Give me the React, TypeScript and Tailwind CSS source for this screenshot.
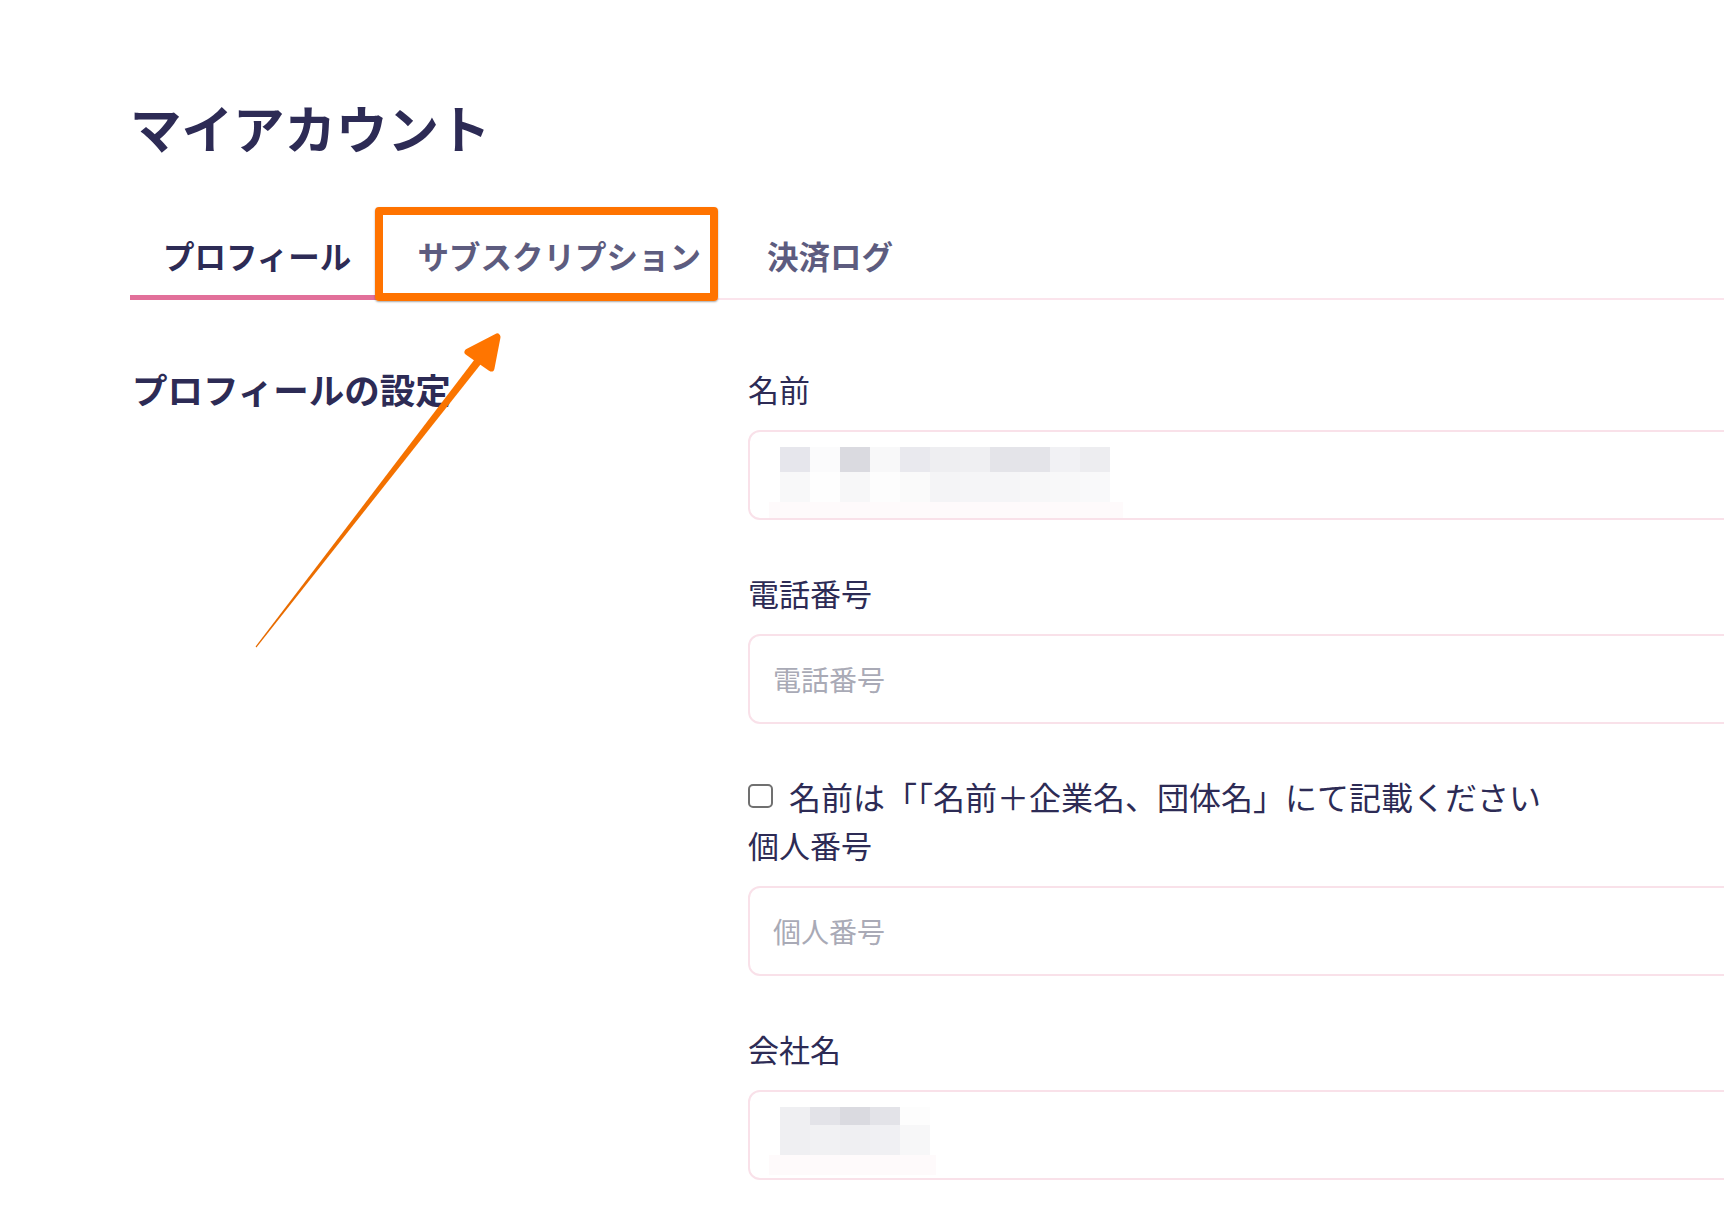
import React from "react";

const nameTop = [
  "bg-[#e6e6ec]", "bg-[#fbfbfc]", "bg-[#dadae0]", "bg-[#f8f8f9]", "bg-[#e9e9ee]", "bg-[#eeeef1]",
  "bg-[#efeff2]", "bg-[#e4e4e9]", "bg-[#e4e4e9]", "bg-[#f1f1f4]", "bg-[#ededf0]",
];
const nameBottom = [
  "bg-[#f8f8f9]", "bg-[#fefefe]", "bg-[#f7f7f8]", "bg-[#fdfdfd]", "bg-[#fafafa]", "bg-[#f4f4f6]",
  "bg-[#f5f5f7]", "bg-[#f5f5f7]", "bg-[#f7f7f8]", "bg-[#f8f8f9]", "bg-[#f9f9fa]",
];
const compTop = ["bg-[#efeff2]", "bg-[#e3e3e8]", "bg-[#dadae0]", "bg-[#e3e3e8]", "bg-[#fdfdfd]"];
const compBottom = ["bg-[#efeff2]", "bg-[#f1f1f3]", "bg-[#efeff2]", "bg-[#f0f0f3]", "bg-[#f7f7f8]"];

function Label({ children, className = "" }: { children: React.ReactNode; className?: string }) {
  return <div className={`text-[31px] leading-[48px] text-[#2d2b55] ${className}`}>{children}</div>;
}

function TextInput({ placeholder }: { placeholder: string }) {
  return (
    <input
      placeholder={placeholder}
      className="mt-[17px] block h-[90px] w-full rounded-[12px] border-2 border-[#f9e1e9] bg-white pl-[23px] font-['Noto_Sans_CJK_JP','Noto_Sans',sans-serif] text-[28px] text-[#2d2b55] outline-none placeholder:text-[#a9aab6]"
    />
  );
}

function BlurBox({ top, bottom, topH, stripW }: { top: string[]; bottom: string[]; topH: string; stripW: string }) {
  return (
    <div className="mt-[17px] flex h-[90px] w-full flex-col overflow-hidden rounded-[12px] border-2 border-[#f9e1e9] bg-white pl-[30px] pt-[15px]">
      <div className="flex">
        {top.map((c, i) => (
          <div key={i} className={`w-[30px] ${topH} ${c}`} />
        ))}
      </div>
      <div className="flex">
        {bottom.map((c, i) => (
          <div key={i} className={`h-[30px] w-[30px] ${c}`} />
        ))}
      </div>
      <div className={`-ml-[11px] h-[20px] bg-[#fefafb] ${stripW}`} />
    </div>
  );
}

export default function App() {
  return (
    <div className="relative min-h-screen w-full overflow-hidden bg-white font-['Noto_Sans_CJK_JP','Noto_Sans',sans-serif]">
      <div className="pl-[130px] pt-[96px]">
        <h1 className="text-[51.5px] font-bold leading-[62px] text-[#2d2b55]">マイアカウント</h1>

        <div className="mt-[77px] flex w-[1700px] border-b-2 border-[#fbe4ec]">
          <div className="-mb-[2px] border-b-[5px] border-[#e2709a] px-[33px] pb-5 text-[31.5px] font-bold leading-[40px] text-[#2d2b55]">
            プロフィール
          </div>
          <div className="-mb-[2px] border-b-[5px] border-transparent px-[33px] pb-5 text-[31.5px] font-bold leading-[40px] text-[#5d5c7f]">
            サブスクリプション
          </div>
          <div className="-mb-[2px] border-b-[5px] border-transparent px-[33px] pb-5 text-[31.5px] font-bold leading-[40px] text-[#5d5c7f]">
            決済ログ
          </div>
        </div>

        <div className="mt-[65px] flex">
          <div className="w-[618px] shrink-0">
            <h2 className="pl-[2px] text-[35.5px] font-bold leading-[48px] text-[#2d2b55]">プロフィールの設定</h2>
          </div>
          <div className="w-[1100px] shrink-0 pb-[60px]">
            <Label>名前</Label>
            <BlurBox top={nameTop} bottom={nameBottom} topH="h-[25px]" stripW="w-[354px]" />

            <Label className="mt-[49px]">電話番号</Label>
            <TextInput placeholder="電話番号" />

            <div className="mt-[48px] flex h-[48px] items-center">
              <div className="h-[24px] w-[25px] shrink-0 rounded-[5px] border-2 border-[#707070] bg-white" />
              <span className="ml-[16px] text-[32px] leading-[48px] text-[#2d2b55]">
                名前は「「名前＋企業名、団体名」にて記載ください
              </span>
            </div>

            <Label className="mt-[1px]">個人番号</Label>
            <TextInput placeholder="個人番号" />

            <Label className="mt-[49px]">会社名</Label>
            <BlurBox top={compTop} bottom={compBottom} topH="h-[18px]" stripW="w-[167px]" />
          </div>
        </div>
      </div>

      {/* annotation: highlight box */}
      <div className="pointer-events-none absolute left-[375px] top-[207px] h-[94px] w-[343px] rounded-[4px] border-[8px] border-[#ff7300] shadow-[0_1px_2px_rgba(0,0,0,0.35)]" />

      {/* annotation: arrow */}
      <svg
        className="pointer-events-none absolute left-0 top-0"
        width="1724"
        height="1224"
        viewBox="0 0 1724 1224"
      >
        <defs>
          <linearGradient id="arr" gradientUnits="userSpaceOnUse" x1="256" y1="647" x2="497" y2="337">
            <stop offset="0" stopColor="#e56a00" />
            <stop offset="1" stopColor="#ff7700" />
          </linearGradient>
        </defs>
        <path d="M255.6 646.6 L485.2 345.6 L491.6 350.6 L256.4 647.4 Z" fill="url(#arr)" />
        <path
          d="M468 352 L497 337 L491 368 Z"
          fill="#ff7500"
          stroke="#ff7500"
          strokeWidth="7"
          strokeLinejoin="round"
          strokeLinecap="round"
        />
      </svg>
    </div>
  );
}
